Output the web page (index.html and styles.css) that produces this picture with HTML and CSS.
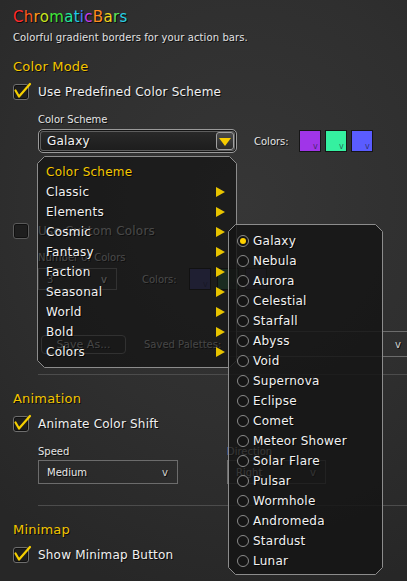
FILE: index.html
```html
<!DOCTYPE html>
<html>
<head>
<meta charset="utf-8">
<link rel="stylesheet" href="styles.css">
</head>
<body>
<div class="panel">
  <h1 class="title"><span class="t1">C</span><span class="t2">h</span><span class="t3">r</span><span class="t4">o</span><span class="t5">m</span><span class="t6">a</span><span class="t7">t</span><span class="t8">i</span><span class="t9">c</span><span class="t10">B</span><span class="t11">a</span><span class="t12">r</span><span class="t13">s</span></h1>
  <p class="subtitle">Colorful gradient borders for your action bars.</p>

  <h2 class="sec-h first">Color Mode</h2>
  <div class="check-row">
    <span class="cb"><svg class="check" width="16" height="16" viewBox="0 0 16 16"><polyline points="2.5,6.5 6,12.5 17,0" /></svg></span>
    <span class="cb-label">Use Predefined Color Scheme</span>
  </div>
  <div class="indent">
    <div class="field-label">Color Scheme</div>
    <div class="scheme-row">
      <div class="bevel-dd"><span class="dd-text">Galaxy</span><span class="dd-btn"><span class="tri-down"></span></span></div>
      <span class="colors-label">Colors:</span>
      <div class="swatches">
        <span class="sw sw-purple"><i>v</i></span>
        <span class="sw sw-green"><i>v</i></span>
        <span class="sw sw-blue"><i>v</i></span>
      </div>
    </div>
  </div>

  <div class="check-row custom-row">
    <span class="cb"></span>
    <span class="cb-label dim">Use Custom Colors</span>
  </div>
  <div class="indent dim">
    <div class="field-label num-label">Number of Colors</div>
    <div class="num-row">
      <div class="flat-dd num-dd"><span>3</span><span class="v">v</span></div>
      <span class="colors-label">Colors:</span>
      <div class="swatches wide">
        <span class="sw sw-d1"><i>v</i></span>
        <span class="sw sw-d2"><i>v</i></span>
        <span class="sw sw-d3"><i>v</i></span>
      </div>
    </div>
    <div class="palette-row">
      <span class="btn">Save As...</span>
      <span class="pal-label">Saved Palettes:</span>
      <div class="flat-dd pal-dd"><span></span><span class="v">v</span></div>
    </div>
  </div>

  <div class="sep sep1"></div>

  <h2 class="sec-h after-sep">Animation</h2>
  <div class="check-row">
    <span class="cb"><svg class="check" width="16" height="16" viewBox="0 0 16 16"><polyline points="2.5,6.5 6,12.5 17,0" /></svg></span>
    <span class="cb-label">Animate Color Shift</span>
  </div>
  <div class="indent anim-grid">
    <div class="col">
      <div class="field-label">Speed</div>
      <div class="flat-dd speed-dd"><span>Medium</span><span class="v">v</span></div>
    </div>
    <div class="col">
      <div class="field-label">Direction</div>
      <div class="flat-dd dir-dd"><span>Right</span><span class="v">v</span></div>
    </div>
  </div>

  <div class="sep sep2"></div>

  <h2 class="sec-h after-sep">Minimap</h2>
  <div class="check-row">
    <span class="cb"><svg class="check" width="16" height="16" viewBox="0 0 16 16"><polyline points="2.5,6.5 6,12.5 17,0" /></svg></span>
    <span class="cb-label">Show Minimap Button</span>
  </div>
</div>

<div class="menu main-menu">
  <svg class="menu-frame" width="200" height="212" viewBox="0 0 200 212"><polygon points="7.5,0.5 192.5,0.5 199.5,7.5 199.5,204.5 192.5,211.5 7.5,211.5 0.5,204.5 0.5,7.5"/></svg>
  <ul class="menu-list">
    <li class="menu-head">Color Scheme</li>
    <li><span>Classic</span><span class="arrow"></span></li>
    <li><span>Elements</span><span class="arrow"></span></li>
    <li><span>Cosmic</span><span class="arrow"></span></li>
    <li><span>Fantasy</span><span class="arrow"></span></li>
    <li><span>Faction</span><span class="arrow"></span></li>
    <li><span>Seasonal</span><span class="arrow"></span></li>
    <li><span>World</span><span class="arrow"></span></li>
    <li><span>Bold</span><span class="arrow"></span></li>
    <li><span>Colors</span><span class="arrow"></span></li>
  </ul>
</div>

<div class="menu sub-menu">
  <svg class="menu-frame" width="155" height="351" viewBox="0 0 155 351"><polygon points="7.5,0.5 147.5,0.5 154.5,7.5 154.5,343.5 147.5,350.5 7.5,350.5 0.5,343.5 0.5,7.5"/></svg>
  <ul class="menu-list radios">
    <li><span class="radio on"></span><span>Galaxy</span></li>
    <li><span class="radio"></span><span>Nebula</span></li>
    <li><span class="radio"></span><span>Aurora</span></li>
    <li><span class="radio"></span><span>Celestial</span></li>
    <li><span class="radio"></span><span>Starfall</span></li>
    <li><span class="radio"></span><span>Abyss</span></li>
    <li><span class="radio"></span><span>Void</span></li>
    <li><span class="radio"></span><span>Supernova</span></li>
    <li><span class="radio"></span><span>Eclipse</span></li>
    <li><span class="radio"></span><span>Comet</span></li>
    <li><span class="radio"></span><span>Meteor Shower</span></li>
    <li><span class="radio"></span><span>Solar Flare</span></li>
    <li><span class="radio"></span><span>Pulsar</span></li>
    <li><span class="radio"></span><span>Wormhole</span></li>
    <li><span class="radio"></span><span>Andromeda</span></li>
    <li><span class="radio"></span><span>Stardust</span></li>
    <li><span class="radio"></span><span>Lunar</span></li>
  </ul>
</div>
</body>
</html>
```

FILE: styles.css
```css
* { box-sizing: border-box; }
html, body { margin: 0; padding: 0; }
body {
  width: 407px;
  height: 581px;
  overflow: hidden;
  position: relative;
  font-family: "DejaVu Sans", "Liberation Sans", sans-serif;
  color: #f0f0f0;
  background:
    radial-gradient(ellipse 90% 70% at 60% 35%, #363636 0%, #2f2f2f 55%, #272727 100%);
}
.panel {
  padding: 9px 0 0 13px;
  text-shadow: 1px 1px 0 rgba(0,0,0,0.75);
  white-space: nowrap;
}
.title {
  margin: 0;
  height: 16px;
  font-size: 15px;
  line-height: 17px;
  font-weight: normal;
  letter-spacing: 0.3px;
}
.t1 { color: #ff2a2a; }
.t2 { color: #ff5a1e; }
.t3 { color: #ff9a1a; }
.t4 { color: #c8e61e; }
.t5 { color: #3ee63a; }
.t6 { color: #1ee6a0; }
.t7 { color: #1ec8e6; }
.t8 { color: #3c78ff; }
.t9 { color: #c83cf0; }
.t10 { color: #ff8c1e; }
.t11 { color: #f0d21e; }
.t12 { color: #5ae65a; }
.t13 { color: #28d2e6; }
.subtitle {
  margin: 6px 0 0;
  font-size: 10px;
  line-height: 13px;
  letter-spacing: 0.1px;
  color: #e2e2e2;
}
.sec-h {
  margin: 14px 0 0;
  height: 16px;
  font-size: 13px;
  line-height: 17px;
  font-weight: normal;
  color: #f2c400;
  letter-spacing: 0.2px;
}
.sec-h.first { margin-top: 14px; }
.sec-h.after-sep { margin-top: 15px; }
.check-row {
  display: flex;
  align-items: center;
  height: 16px;
  margin-top: 10px;
}
.cb {
  position: relative;
  width: 16px;
  height: 16px;
  flex: none;
  border: 1px solid #6e6e6e;
  border-radius: 3px;
  background: #1e1e1e;
  box-shadow: inset 0 0 0 1px #101010;
}
.check {
  position: absolute;
  left: -1px;
  top: -1px;
  overflow: visible;
}
.check polyline {
  fill: none;
  stroke: #f5cf00;
  stroke-width: 2.2;
  stroke-linejoin: round;
  stroke-linecap: round;
}
.cb-label {
  margin-left: 9px;
  font-size: 12px;
  line-height: 18px;
  letter-spacing: 0.2px;
  color: #f0f0f0;
}
.indent { margin-left: 25px; }
.field-label {
  margin-top: 13px;
  height: 12px;
  font-size: 10px;
  line-height: 13px;
  color: #e4e4e4;
}
.scheme-row {
  display: flex;
  align-items: center;
  height: 24px;
  margin-top: 4px;
}
.bevel-dd {
  position: relative;
  width: 199px;
  height: 24px;
  flex: none;
  display: flex;
  align-items: center;
  padding-left: 8px;
  border: 1px solid #9a9a9a;
  border-radius: 5px;
  background: linear-gradient(#2a2a2a, #1c1c1c);
  box-shadow: inset 0 0 0 1px #141414, inset 0 0 0 2px #5e5e5e;
}
.dd-text {
  font-size: 12px;
  letter-spacing: 0.2px;
  color: #f4f4f4;
}
.dd-btn {
  position: absolute;
  right: 2px;
  top: 2px;
  width: 18px;
  height: 18px;
  border: 1px solid #a0a0a0;
  border-radius: 3px;
  background: linear-gradient(#4a4a4a, #2a2a2a);
  display: flex;
  align-items: center;
  justify-content: center;
}
.tri-down {
  width: 0;
  height: 0;
  margin-top: 1px;
  border-left: 6px solid transparent;
  border-right: 6px solid transparent;
  border-top: 8px solid #f7cc00;
}
.colors-label {
  margin-left: 17px;
  font-size: 10px;
  color: #e4e4e4;
  flex: none;
}
.swatches {
  display: flex;
  gap: 4px;
  margin-left: 10px;
  flex: none;
}
.sw {
  position: relative;
  width: 22px;
  height: 22px;
  border: 1px solid #161616;
}
.sw i {
  position: absolute;
  right: 2px;
  bottom: 0;
  font-style: normal;
  font-size: 8px;
  line-height: 9px;
  color: rgba(30,30,60,0.7);
  text-shadow: none;
}
.sw-purple { background: #a035e8; }
.sw-green { background: #35f0a0; }
.sw-blue { background: #5a5cff; }
.custom-row { margin-top: 70px; }
.custom-row .cb { border-color: #5a5a5a; }
.dim .field-label,
.dim .colors-label,
.cb-label.dim { color: #a8a8a8; }
.num-label { margin-top: 12px; }
.num-row {
  display: flex;
  align-items: center;
  height: 22px;
  margin-top: 5px;
}
.flat-dd {
  display: flex;
  align-items: center;
  justify-content: space-between;
  padding: 0 9px 0 8px;
  border: 1px solid #6c6c6c;
  font-size: 10px;
  color: #e8e8e8;
  flex: none;
}
.flat-dd .v { font-size: 10px; color: #d0d0d0; }
.num-dd { width: 79px; height: 22px; color: #a0a0a0; }
.num-row .colors-label { margin-left: 25px; }
.swatches.wide { gap: 6px; margin-left: 12px; }
.sw-d1 { background: #3a3a6c; }
.sw-d2 { background: #2e5a3e; }
.sw-d3 { background: #3a3552; }
.palette-row {
  display: flex;
  align-items: center;
  height: 26px;
  margin-top: 41px;
}
.btn {
  width: 85px;
  height: 19px;
  margin-left: 3px;
  flex: none;
  display: flex;
  align-items: center;
  justify-content: center;
  border: 1px solid #6a6a6a;
  border-radius: 4px;
  background: #2a2a2a;
  font-size: 11px;
  color: #a0a0a0;
}
.pal-label {
  margin-left: 18px;
  width: 84px;
  flex: none;
  font-size: 10px;
  color: #a0a0a0;
}
.pal-dd {
  width: 179px;
  height: 26px;
  padding-right: 6px;
  border-right: none;
}
.sep {
  height: 1px;
  margin-left: 25px;
  background: #4c4c4c;
}
.sep1 { margin-top: 17px; }
.sep2 { margin-top: 21px; }
.anim-grid {
  display: grid;
  grid-template-columns: 140px 140px;
  column-gap: 49px;
}
.anim-grid .field-label { margin-top: 13px; }
.speed-dd, .dir-dd {
  height: 24px;
  margin-top: 3px;
}
.dir-dd { width: 99px; }

/* overlay menus */
.menu {
  position: absolute;
  font-family: "DejaVu Sans", "Liberation Sans", sans-serif;
  text-shadow: 1px 1px 0 rgba(0,0,0,0.8);
}
.menu-frame {
  position: absolute;
  left: 0;
  top: 0;
}
.menu-frame polygon {
  stroke: #8c8c8c;
  stroke-width: 1;
}
.main-menu {
  left: 37px;
  top: 156px;
  width: 200px;
  height: 212px;
}
.main-menu .menu-frame polygon { fill: rgba(14,14,14,0.62); }
.sub-menu {
  left: 228px;
  top: 224px;
  width: 155px;
  height: 351px;
}
.sub-menu .menu-frame polygon { fill: rgba(20,20,20,0.84); }
.menu-list {
  position: relative;
  list-style: none;
  margin: 0;
  padding: 6px 12px 0 9px;
}
.menu-list li {
  display: flex;
  align-items: center;
  justify-content: space-between;
  height: 20px;
  font-size: 12px;
  letter-spacing: 0.25px;
  color: #f2f2f2;
}
.menu-list li.menu-head { color: #f5c800; }
.arrow {
  width: 0;
  height: 0;
  border-top: 5px solid transparent;
  border-bottom: 5px solid transparent;
  border-left: 9px solid #e8c400;
}
.radios { padding: 7px 8px 0 9px; }
.radios li { justify-content: flex-start; }
.radio {
  width: 12px;
  height: 12px;
  margin-right: 4px;
  flex: none;
  border: 1px solid #8a8a8a;
  border-radius: 50%;
  background: #151515;
  position: relative;
}
.radio.on::after {
  content: "";
  position: absolute;
  left: 2px;
  top: 2px;
  width: 6px;
  height: 6px;
  border-radius: 50%;
  background: #ffd200;
}
```
